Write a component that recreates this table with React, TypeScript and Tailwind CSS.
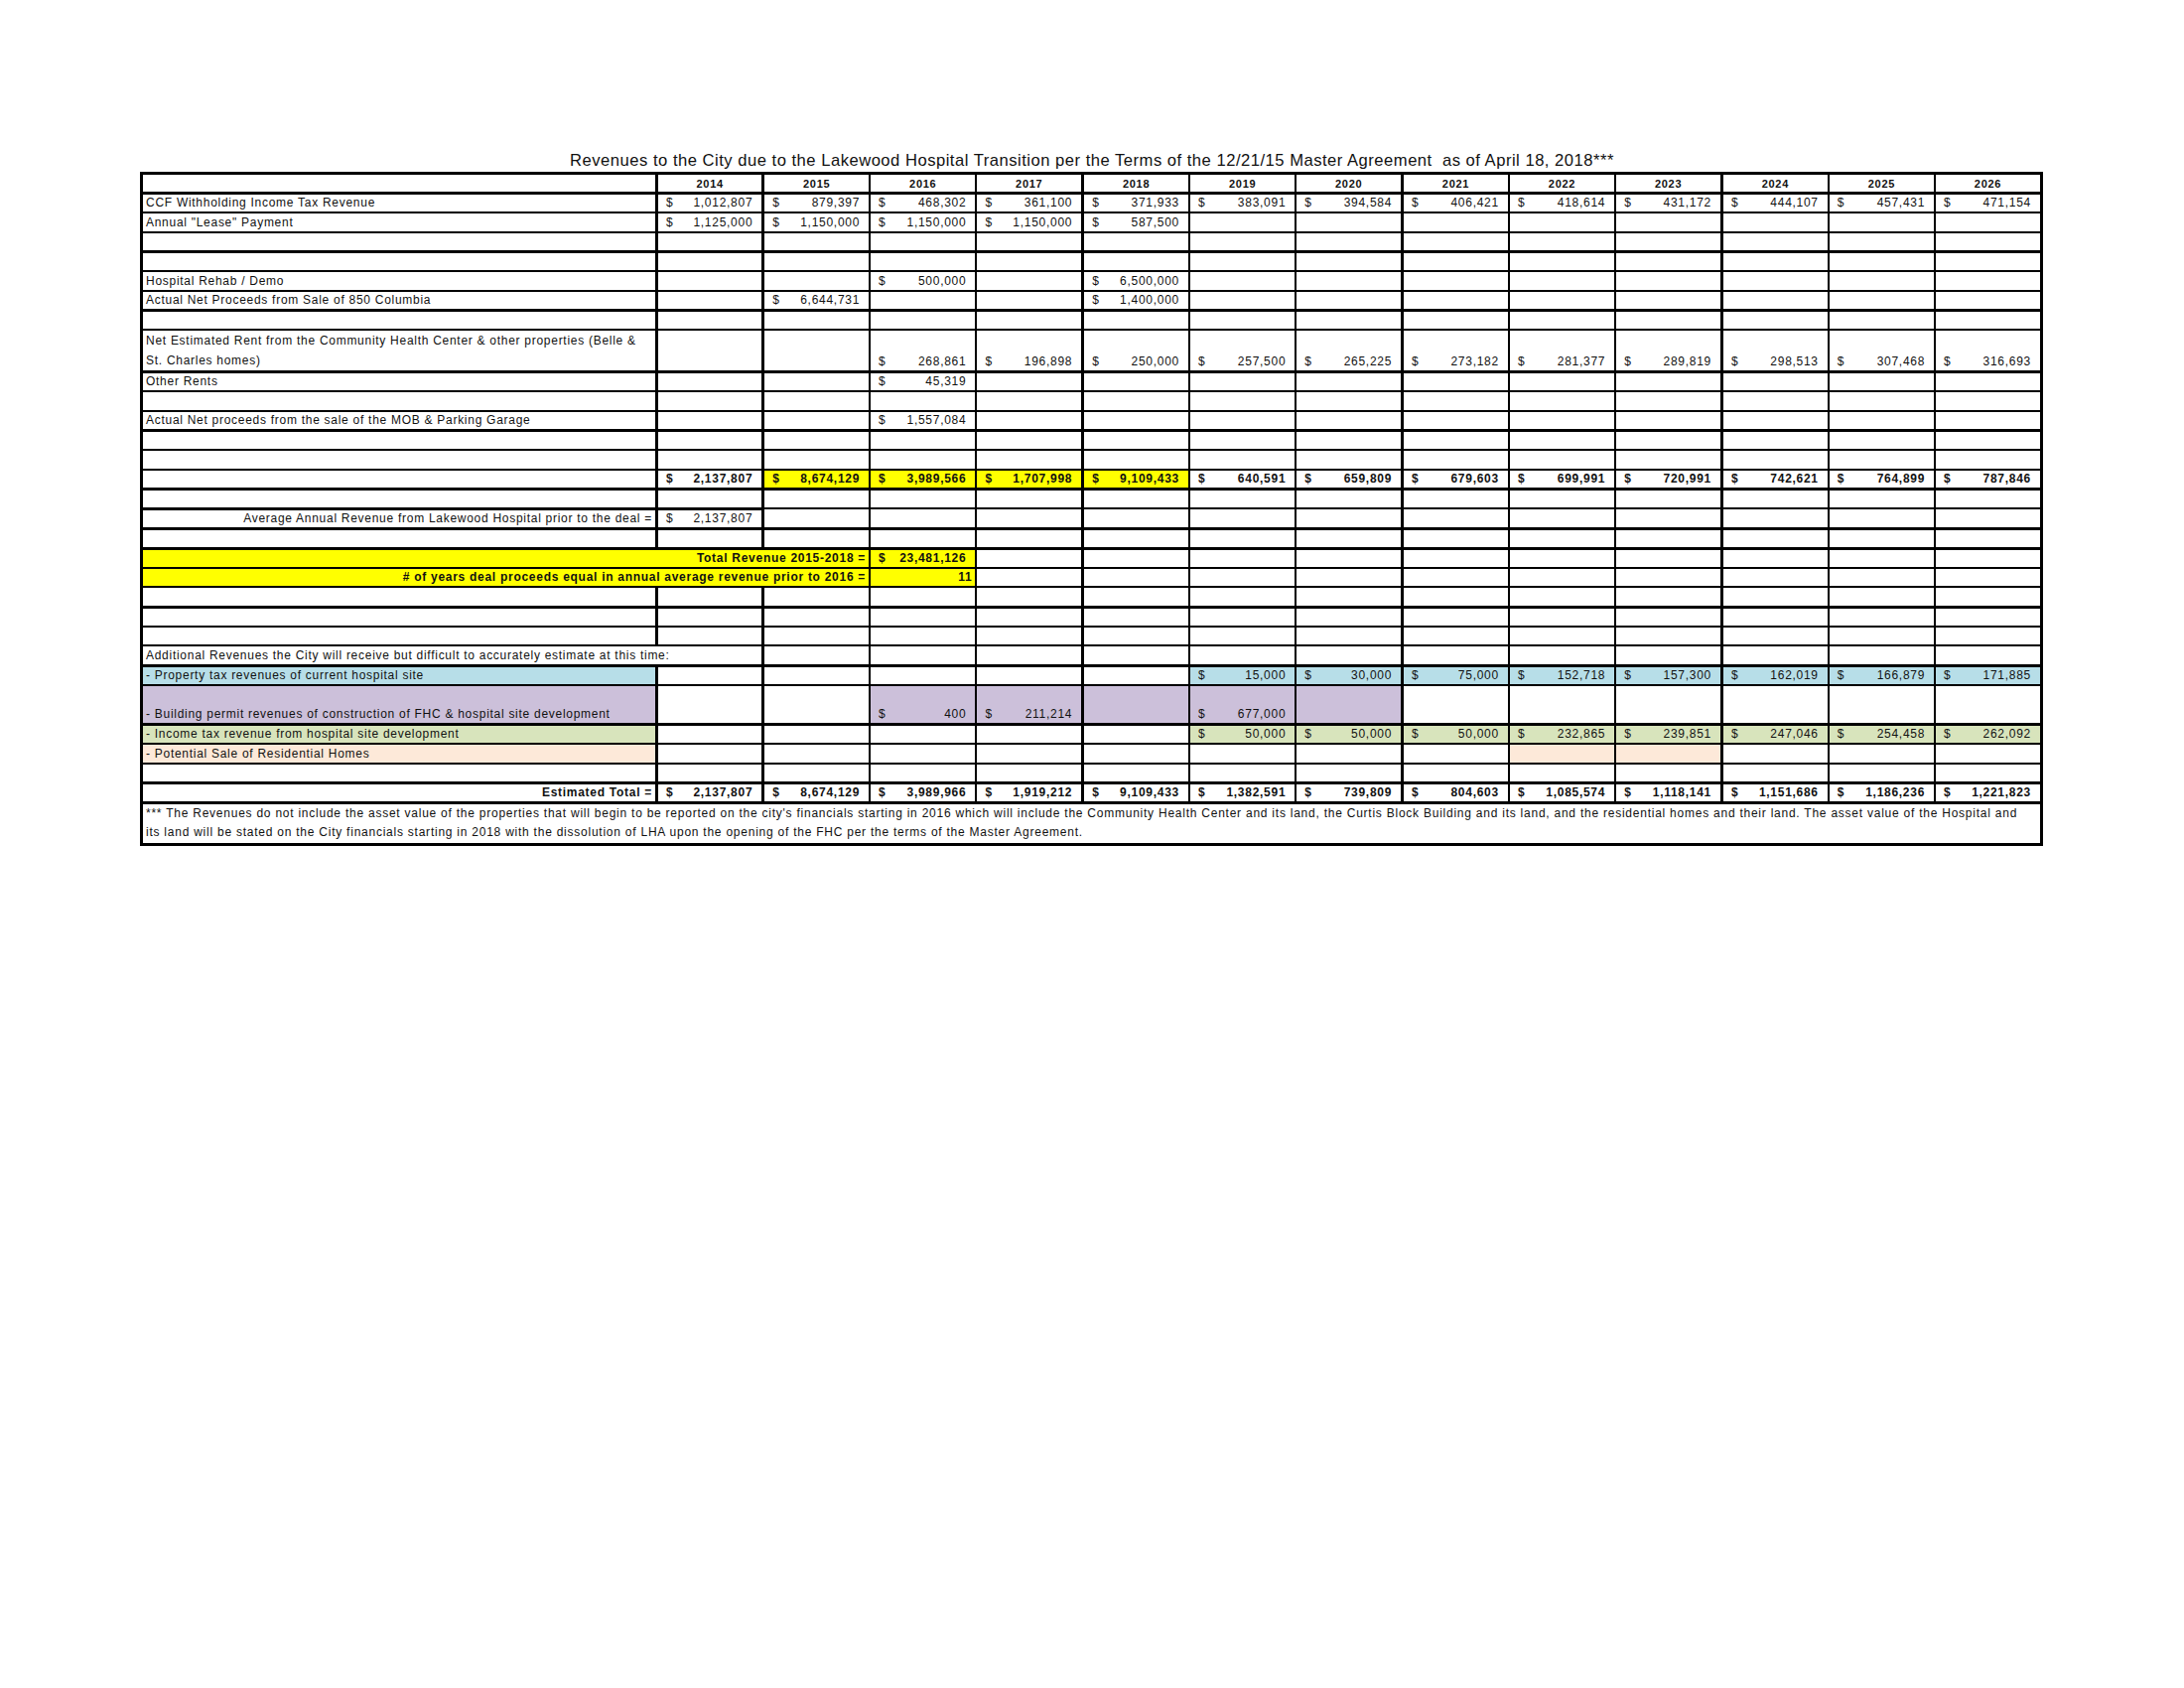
import React from 'react';

type Bg = 'yellow' | 'blue' | 'purple' | 'green' | 'peach';

interface Cell {
  span?: number;
  text?: string;
  money?: string;
  bold?: boolean;
  align?: 'left' | 'right' | 'center';
  bg?: Bg;
  head?: boolean;
  box?: boolean;
}

interface Row {
  tall?: boolean;
  bottom: 2 | 3;
  cells: Cell[];
  note?: boolean;
}

const YEARS = ['2014', '2015', '2016', '2017', '2018', '2019', '2020', '2021', '2022', '2023', '2024', '2025', '2026'];

// thickness of each vertical grid line, from the left edge to the right edge
const V = [3, 3, 3, 2, 2, 3, 2, 2, 3, 2, 2, 3, 2, 2, 3];

const bgClass: Record<Bg, string> = {
  yellow: 'bg-[#ffff00]',
  blue: 'bg-[#b7dee8]',
  purple: 'bg-[#ccc0da]',
  green: 'bg-[#d8e4bc]',
  peach: 'bg-[#fde9d9]',
};

const empties = (n: number, bg?: Bg): Cell[] => Array.from({ length: n }, () => ({ bg }));
const money = (vals: (string | null)[], opts: { bold?: boolean; bg?: Bg } = {}): Cell[] =>
  vals.map((v) => (v ? { money: v, ...opts } : { bg: opts.bg }));
const label = (text: string, extra: Partial<Cell> = {}): Cell => ({ text, ...extra });
const blank = (bottom: 2 | 3 = 2): Row => ({ bottom, cells: empties(14) });

const rows: Row[] = [
  { bottom: 3, cells: [{}, ...YEARS.map((y) => ({ text: y, head: true, align: 'center' as const }))] },
  {
    bottom: 2,
    cells: [
      label('CCF Withholding Income Tax Revenue'),
      ...money(['1,012,807', '879,397', '468,302', '361,100', '371,933', '383,091', '394,584', '406,421', '418,614', '431,172', '444,107', '457,431', '471,154']),
    ],
  },
  {
    bottom: 2,
    cells: [label('Annual "Lease" Payment'), ...money(['1,125,000', '1,150,000', '1,150,000', '1,150,000', '587,500']), ...empties(8)],
  },
  blank(3),
  blank(2),
  { bottom: 2, cells: [label('Hospital Rehab / Demo'), ...money([null, null, '500,000', null, '6,500,000']), ...empties(8)] },
  { bottom: 3, cells: [label('Actual Net Proceeds from Sale of 850 Columbia'), ...money([null, '6,644,731', null, null, '1,400,000']), ...empties(8)] },
  blank(2),
  {
    tall: true,
    bottom: 3,
    cells: [
      label('Net Estimated Rent from the Community Health Center & other properties (Belle &|St. Charles homes)'),
      ...money([null, null, '268,861', '196,898', '250,000', '257,500', '265,225', '273,182', '281,377', '289,819', '298,513', '307,468', '316,693']),
    ],
  },
  { bottom: 2, cells: [label('Other Rents'), ...money([null, null, '45,319']), ...empties(10)] },
  blank(2),
  { bottom: 3, cells: [label('Actual Net proceeds from the sale of the MOB & Parking Garage'), ...money([null, null, '1,557,084']), ...empties(10)] },
  blank(2),
  blank(2),
  {
    bottom: 3,
    cells: [
      {},
      ...money(['2,137,807'], { bold: true }),
      ...money(['8,674,129', '3,989,566', '1,707,998', '9,109,433'], { bold: true, bg: 'yellow' }),
      ...money(['640,591', '659,809', '679,603', '699,991', '720,991', '742,621', '764,899', '787,846'], { bold: true }),
    ],
  },
  blank(2),
  {
    bottom: 3,
    cells: [
      label('Average Annual Revenue from Lakewood Hospital prior to the deal =', { align: 'right', box: true }),
      { money: '2,137,807', box: true },
      ...empties(12),
    ],
  },
  blank(3),
  {
    bottom: 2,
    cells: [
      { span: 3, text: 'Total Revenue 2015-2018 =', bold: true, align: 'right', bg: 'yellow' },
      { money: '23,481,126', bold: true, bg: 'yellow' },
      ...empties(10),
    ],
  },
  {
    bottom: 2,
    cells: [
      { span: 3, text: '# of years deal proceeds equal in annual average revenue prior to 2016 =', bold: true, align: 'right', bg: 'yellow' },
      { text: '11', bold: true, align: 'right', bg: 'yellow' },
      ...empties(10),
    ],
  },
  blank(3),
  blank(2),
  blank(2),
  {
    bottom: 3,
    cells: [{ span: 2, text: 'Additional Revenues the City will receive but difficult to accurately estimate at this time:' }, ...empties(12)],
  },
  {
    bottom: 2,
    cells: [
      label('-  Property tax revenues of current hospital site', { bg: 'blue' }),
      ...empties(5),
      ...money(['15,000', '30,000', '75,000', '152,718', '157,300', '162,019', '166,879', '171,885'], { bg: 'blue' }),
    ],
  },
  {
    tall: true,
    bottom: 3,
    cells: [
      label('-  Building permit revenues of construction of FHC & hospital site development', { bg: 'purple' }),
      ...empties(2),
      ...money(['400', '211,214', null, '677,000', null], { bg: 'purple' }),
      ...empties(6),
    ],
  },
  {
    bottom: 2,
    cells: [
      label('- Income tax revenue from hospital site development', { bg: 'green' }),
      ...empties(5),
      ...money(['50,000', '50,000', '50,000', '232,865', '239,851', '247,046', '254,458', '262,092'], { bg: 'green' }),
    ],
  },
  {
    bottom: 2,
    cells: [label('- Potential Sale of Residential Homes', { bg: 'peach' }), ...empties(8), ...empties(2, 'peach'), ...empties(3)],
  },
  blank(3),
  {
    bottom: 3,
    cells: [
      label('Estimated Total =', { align: 'right', bold: true }),
      ...money(
        ['2,137,807', '8,674,129', '3,989,966', '1,919,212', '9,109,433', '1,382,591', '739,809', '804,603', '1,085,574', '1,118,141', '1,151,686', '1,186,236', '1,221,823'],
        { bold: true },
      ),
    ],
  },
  {
    bottom: 3,
    note: true,
    cells: [
      {
        span: 14,
        text:
          "***  The Revenues do not include the asset value of the properties that will begin to be reported on the city's financials starting in 2016 which will include the Community Health Center and its land, the Curtis Block Building and its land, and the residential homes and their land.  The asset value of the Hospital and|its land will be stated on the City financials starting in 2018 with the dissolution of LHA upon the opening of the FHC per the terms of the Master Agreement.",
      },
    ],
  },
];

const SheetCell = ({ cell, col, row, first }: { cell: Cell; col: number; row: Row; first: boolean }) => {
  const span = cell.span ?? 1;
  const l = V[col] === 3 ? 'border-l-[3px]' : 'border-l-2';
  const r = V[col + span] === 3 ? 'border-r-[3px]' : 'border-r-2';
  const b = row.bottom === 3 ? 'border-b-[3px]' : 'border-b-2';
  const t = first || cell.box ? 'border-t-[3px]' : 'border-t-0';
  const align = cell.align === 'right' ? 'text-right pr-[3px]' : cell.align === 'center' ? 'text-center' : 'text-left pl-[3px]';
  const lines = cell.text ? cell.text.split('|') : [];

  return (
    <td
      colSpan={span}
      className={`border-black p-0 align-bottom ${l} ${r} ${b} ${t} ${cell.bg ? bgClass[cell.bg] : 'bg-white'} ${
        cell.bold || cell.head ? 'font-bold' : 'font-normal'
      }`}
    >
      {cell.money ? (
        <div className="flex justify-between pl-[8px] pr-[9px] leading-[17px]">
          <span>$</span>
          <span>{cell.money}</span>
        </div>
      ) : lines.length > 0 ? (
        <div
          className={`${align} ${
            cell.head
              ? 'text-[11px] leading-[16px]'
              : row.note
                ? 'leading-[19px] pb-[1px] tracking-[0.76px]'
                : lines.length > 1
                  ? 'leading-[20px]'
                  : 'leading-[17px]'
          } whitespace-nowrap`}
        >
          {lines.map((ln, i) => (
            <div key={i}>{ln}</div>
          ))}
        </div>
      ) : null}
    </td>
  );
};

export default function App() {
  return (
    <div className="w-[2200px] h-[1700px] bg-white text-black font-['Liberation_Sans',Arial,sans-serif] pt-[151px] pl-[141px]">
      <div className="w-[1918px] text-center text-[16.6px] leading-[22px] tracking-[0.5px] text-[#111]">
        Revenues to the City due to the Lakewood Hospital Transition per the Terms of the 12/21/15 Master Agreement&nbsp; as of April 18, 2018***
      </div>
      <table className="w-[1917px] table-fixed border-collapse text-[12px] tracking-[0.72px] text-[#111]">
        <colgroup>
          <col className="w-[519px]" />
          {YEARS.map((y) => (
            <col key={y} />
          ))}
        </colgroup>
        <tbody>
          {rows.map((row, ri) => {
            let col = 0;
            return (
              <tr key={ri} className={row.note ? 'h-[41px]' : row.tall ? 'h-[39.4px]' : 'h-[19.7px]'}>
                {row.cells.map((cell, ci) => {
                  const start = col;
                  col += cell.span ?? 1;
                  return <SheetCell key={ci} cell={cell} col={start} row={row} first={ri === 0} />;
                })}
              </tr>
            );
          })}
        </tbody>
      </table>
    </div>
  );
}
